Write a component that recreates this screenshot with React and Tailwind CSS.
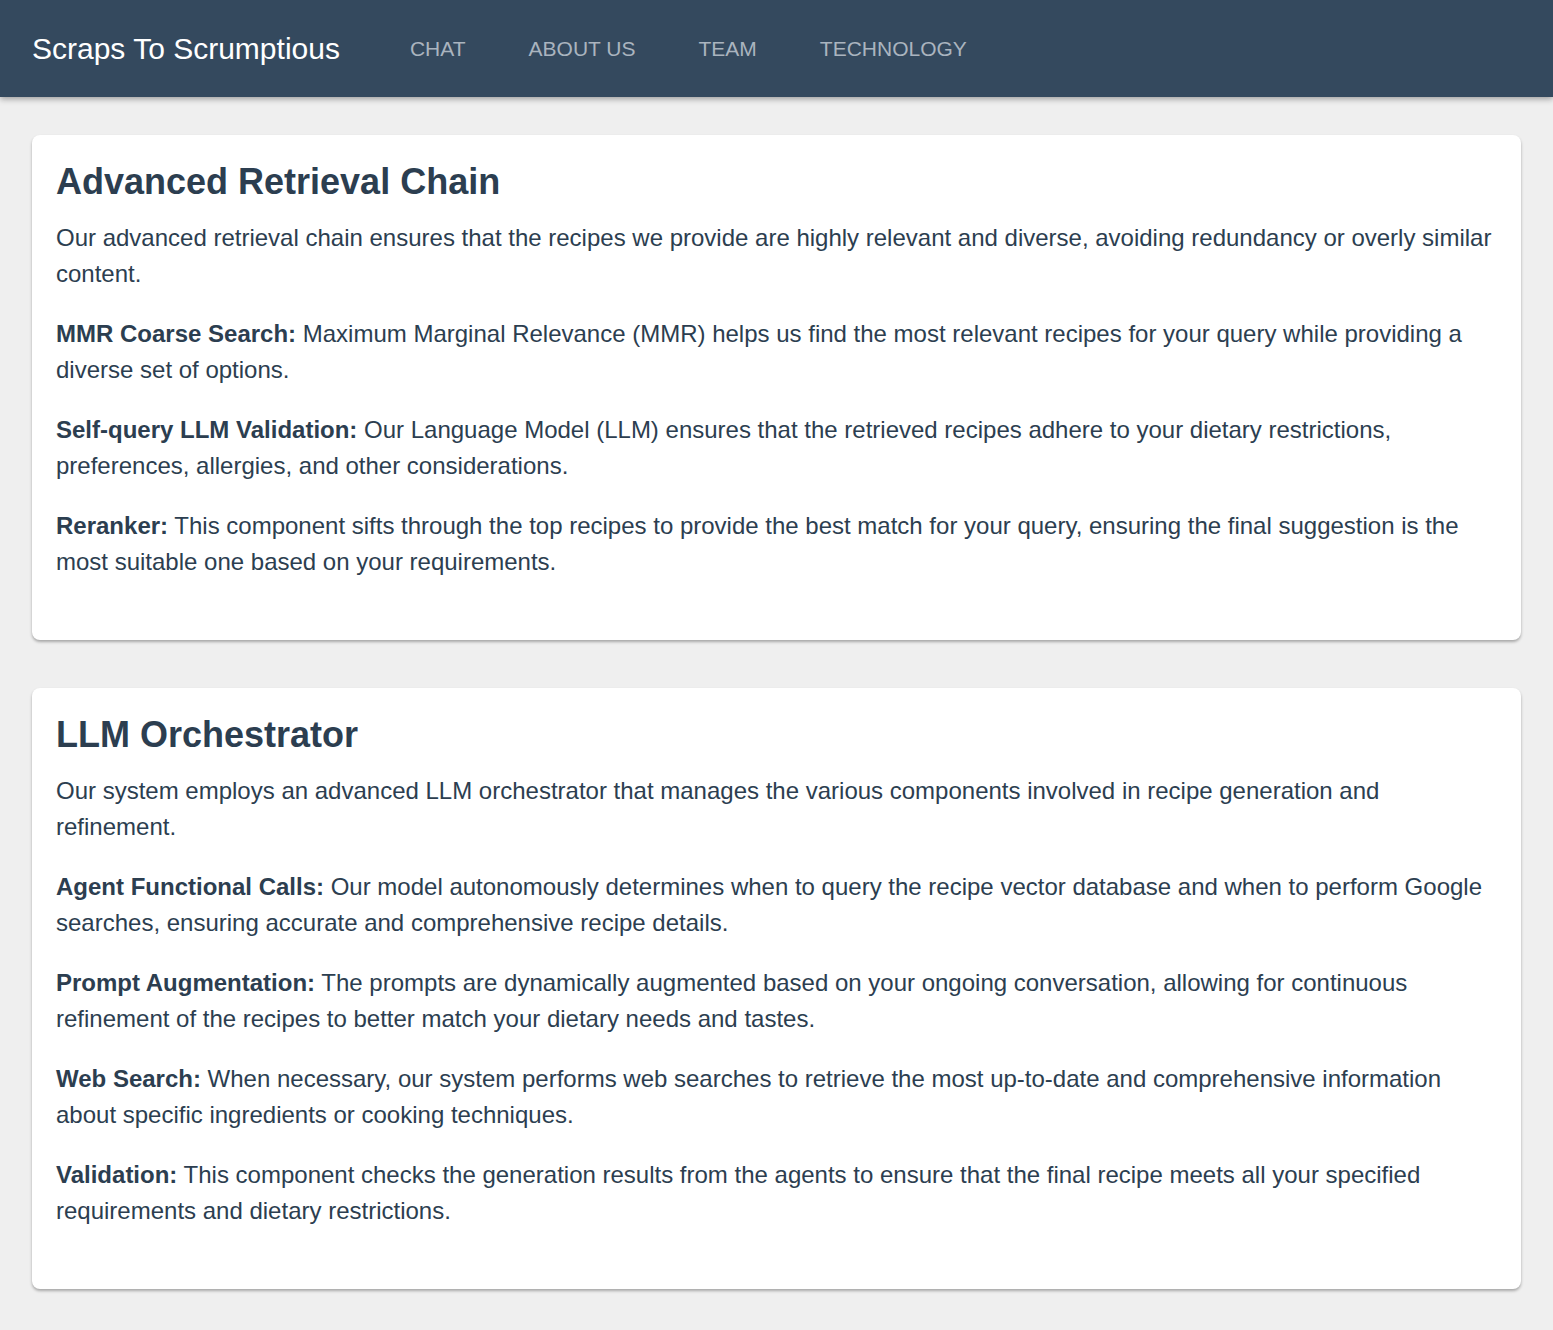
import React from "react";

const sections = [
  {
    title: "Advanced Retrieval Chain",
    intro:
      "Our advanced retrieval chain ensures that the recipes we provide are highly relevant and diverse, avoiding redundancy or overly similar content.",
    items: [
      {
        label: "MMR Coarse Search:",
        text: "Maximum Marginal Relevance (MMR) helps us find the most relevant recipes for your query while providing a diverse set of options.",
      },
      {
        label: "Self-query LLM Validation:",
        text: "Our Language Model (LLM) ensures that the retrieved recipes adhere to your dietary restrictions, preferences, allergies, and other considerations.",
      },
      {
        label: "Reranker:",
        text: "This component sifts through the top recipes to provide the best match for your query, ensuring the final suggestion is the most suitable one based on your requirements.",
      },
    ],
  },
  {
    title: "LLM Orchestrator",
    intro:
      "Our system employs an advanced LLM orchestrator that manages the various components involved in recipe generation and refinement.",
    items: [
      {
        label: "Agent Functional Calls:",
        text: "Our model autonomously determines when to query the recipe vector database and when to perform Google searches, ensuring accurate and comprehensive recipe details.",
      },
      {
        label: "Prompt Augmentation:",
        text: "The prompts are dynamically augmented based on your ongoing conversation, allowing for continuous refinement of the recipes to better match your dietary needs and tastes.",
      },
      {
        label: "Web Search:",
        text: "When necessary, our system performs web searches to retrieve the most up-to-date and comprehensive information about specific ingredients or cooking techniques.",
      },
      {
        label: "Validation:",
        text: "This component checks the generation results from the agents to ensure that the final recipe meets all your specified requirements and dietary restrictions.",
      },
    ],
  },
];

const navLinks = ["CHAT", "ABOUT US", "TEAM", "TECHNOLOGY"];

const App = () => {
  return (
    <div className="min-h-screen bg-[#efefef] font-['Liberation_Sans',Arial,sans-serif]">
      {/* HEADER */}
      <header className="h-[97px] bg-[#34495e] flex items-center px-8 shadow-[0_2px_6px_rgba(0,0,0,0.35)] relative z-10">
        <span className="text-[30px] text-white leading-none">Scraps To Scrumptious</span>
        <nav className="flex items-center gap-[63px] ml-[70px]">
          {navLinks.map((link) => (
            <a key={link} href="#" className="text-[21px] text-[#aab4bf] leading-none">
              {link}
            </a>
          ))}
        </nav>
      </header>

      {/* CONTENT */}
      <main className="px-8 pt-[38px] pb-12 flex flex-col gap-12">
        {sections.map((section) => (
          <section
            key={section.title}
            className="bg-white rounded-lg shadow-[0_2px_3px_rgba(0,0,0,0.3)] px-6 pt-[26px] pb-[36px] text-[#2c3e50]"
          >
            <h2 className="text-[36px] font-bold leading-[41px] mb-[18px]">{section.title}</h2>
            <p className="text-[24px] leading-[36px] mb-6">{section.intro}</p>
            {section.items.map((item) => (
              <p key={item.label} className="text-[24px] leading-[36px] mb-6">
                <strong className="font-bold">{item.label}</strong> {item.text}
              </p>
            ))}
          </section>
        ))}
      </main>
    </div>
  );
};

export default App;
